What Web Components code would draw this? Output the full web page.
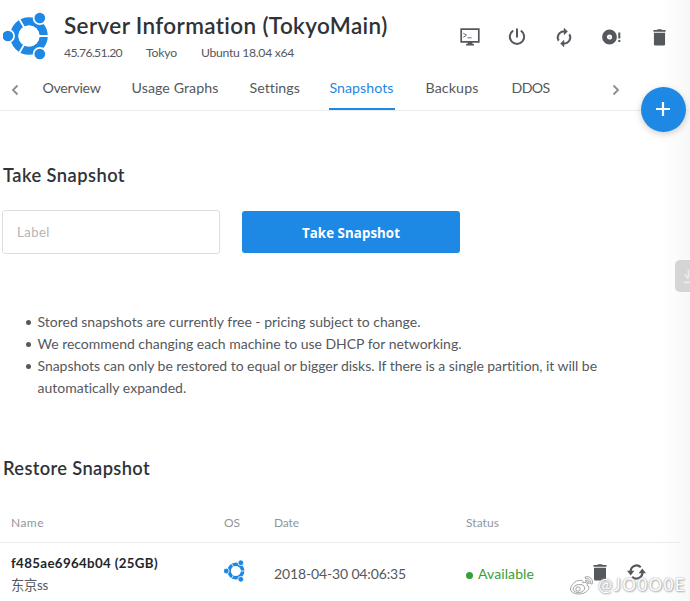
<!DOCTYPE html>
<html lang="en">
<head>
<meta charset="utf-8">
<title>Server Information</title>
<style>
html,body{margin:0;height:601px;overflow:hidden;background:#fff}
body{font-family:Lato,"Noto Sans CJK SC",sans-serif;color:#55585c}
</style>
</head>
<body>
<server-page></server-page>
<script>
const define = (name, html, setup) => customElements.define(name, class extends HTMLElement {
  connectedCallback() {
    if (this.shadowRoot) return;
    const root = this.attachShadow({ mode: 'open' });
    const t = document.createElement('template');
    t.innerHTML = html;
    root.append(t.content.cloneNode(true));
    if (setup) setup(this, root);
  }
});

/* A single line of text tracked to an exact width. */
define('fit-text', `<style>:host{display:inline-block;white-space:nowrap;vertical-align:top}span{display:inline-block}</style><span><slot></slot></span>`,
(el, root) => {
  const span = root.querySelector('span'), w = +el.getAttribute('w');
  const n = [...el.textContent].length;
  const natural = span.getBoundingClientRect().width;
  span.style.letterSpacing = ((w - natural) / n).toFixed(3) + 'px';
  el.style.width = w + 'px';
});

const ICONS = {
  ubuntu: ['0 0 46 48', '<circle cx="26" cy="24" r="14.700" fill="none" stroke="#1e88e5" stroke-width="8.200"/><path d="M26 24H47M26 24L15.500 5.800M26 24L15.500 42.200" stroke="#fff" stroke-width="1.800"/><circle cx="26" cy="24" r="10.500" fill="#fff"/><g fill="#1e88e5" stroke="#fff" stroke-width="1.700"><circle cx="4.900" cy="24" r="6.200"/><circle cx="36.800" cy="6" r="6.200"/><circle cx="36.800" cy="42" r="6.200"/></g>'],
  consol: ['0 0 20 18', '<path d="M1.2 1.2h17.6v12.6H1.2z" fill="none" stroke="currentColor" stroke-width="1.7"/><path d="M7.5 14h5v2H14v1.5H6V16h1.5z" fill="currentColor"/><path d="M3.3 5.2l3.2 2L3.3 9.300M7.500 9.800h4" fill="none" stroke="currentColor" stroke-width=".9"/>'],
  power: ['0 0 18 18', '<path d="M9 .6v9M5.200 2.600a7.200 7.200 0 1 0 7.600 0" fill="none" stroke="currentColor" stroke-width="2"/>'],
  restart: ['3 1 18 22', '<path fill="currentColor" stroke="currentColor" stroke-width=".4" d="M12 4V1l4 4-4 4V6a6 6 0 0 0-5.300 8.800l-1.460 1.460A8 8 0 0 1 12 4zM18.760 7.740A8 8 0 0 1 12 20v3l-4-4 4-4v3a6 6 0 0 0 5.300-8.800z"/>'],
  disc: ['0 0 19 16', '<circle cx="7.500" cy="8" r="5" fill="none" stroke="currentColor" stroke-width="4.800"/><circle cx="7.500" cy="8" r="1" fill="currentColor" opacity=".25"/><path d="M16.300 3.500h2v6h-2zM16.300 11h2v2h-2z" fill="currentColor"/>'],
  trash: ['0 0 14 18', '<path fill="currentColor" d="M1 4h12v12.200q0 1.300-1.300 1.300H2.300Q1 17.500 1 16.200zM.5 1.100h3.700L5.200.300h3.600l1 .8h3.700V3H.5z"/>'],
  cycle: ['0 0 20 16', '<path d="M14.500 3.200A6.300 6.300 0 0 0 3.800 8M5.500 12.800A6.300 6.300 0 0 0 16.200 8" fill="none" stroke="currentColor" stroke-width="2.300"/><path fill="currentColor" d="M0 6.800h7.800L3.900 11.400zM12.200 9.200L16.100 4.600l3.900 4.600z"/>'],
  left: ['0 0 8 12', '<path d="M6.500 1.500L2 6l4.500 4.500" fill="none" stroke="#8a8e92" stroke-width="1.800"/>'],
  right: ['0 0 8 12', '<path d="M1.500 1.500L6 6l-4.500 4.500" fill="none" stroke="#8a8e92" stroke-width="1.800"/>'],
  plus: ['0 0 14 14', '<path d="M7 0v14M0 7h14" stroke="#fff" stroke-width="2.200"/>'],
  download: ['0 0 14 20', '<path d="M12 3v9M7.500 8.500L12 13M6 17h8" fill="none" stroke="#ececec" stroke-width="2"/>'],
  weibo: ['0 0 24 20', '<g fill="#fff" stroke="#999" stroke-width=".9"><path d="M9.500 5.500c2-.8 4 0 3.300 2.300 3-1 5.200.1 4.200 2.500 5 2-.5 8.700-8 8.700C4 19 .5 16.800.5 14c0-3.500 5-9 9-8.500z"/><ellipse cx="9" cy="13.500" rx="5.800" ry="4" transform="rotate(-8 9 13.500)"/><circle cx="8" cy="14" r="2.200"/><path d="M15 2c4.500-1.500 8.500 2 7.200 7l-1.800-.4c.8-3.500-1.800-6-5-5zM15.600 5.200c2.300-.6 4 .9 3.500 3.200l-1.400-.2c.2-1.300-.7-2-1.900-1.700z"/></g>']
};
define('ui-icon', `<style>:host{display:block;flex:none;color:#55585c}svg{display:block;width:100%;height:100%}</style>`, (el, root) => {
  const [vb, body] = ICONS[el.getAttribute('name')];
  const [w, h] = el.getAttribute('size').split('x');
  el.style.width = w + 'px'; el.style.height = h + 'px';
  const t = document.createElement('template');
  t.innerHTML = `<svg viewBox="${vb}" preserveAspectRatio="none">${body}</svg>`;
  root.append(t.content);
});

define('server-header', `<style>
:host{display:flex;height:70px;box-sizing:border-box;padding:11px 21px 0 3px;align-items:flex-start}
ui-icon[name=ubuntu]{margin-top:1px}
.info{margin-left:15px;flex:1}
h1{margin:0;font-size:22.500px;line-height:30px;height:32px;font-weight:600;color:#2f3337}
.meta{display:flex;gap:24px;font-size:12.200px;line-height:20px}
.actions{display:grid;grid-template-columns:repeat(5,20px);gap:27.300px;justify-items:center;align-items:center;height:52px}
</style>
<ui-icon name="ubuntu" size="46x48"></ui-icon>
<div class="info"><h1><fit-text w="324">Server Information (TokyoMain)</fit-text></h1>
<div class="meta"><fit-text w="58">45.76.51.20</fit-text><fit-text w="31">Tokyo</fit-text><fit-text w="93">Ubuntu 18.04 x64</fit-text></div></div>
<div class="actions"><ui-icon name="consol" size="20x18"></ui-icon><ui-icon name="power" size="18x18"></ui-icon><ui-icon name="restart" size="16x19"></ui-icon><ui-icon name="disc" size="19x16"></ui-icon><ui-icon name="trash" size="13x17"></ui-icon></div>`);

define('tab-item', `<style>:host{display:block;box-sizing:border-box;height:41px;padding:8px 1px 0;font-size:14.200px;line-height:20px}
:host([active]){color:#1e88e5;border-bottom:2px solid #1e88e5;height:40px}</style><slot></slot>`);

define('tab-bar', `<style>:host{display:grid;grid-template-columns:41.500px 89px 118px 80px 96px 86px 98.500px 1fr;height:40px;border-bottom:1px solid #e9ebed;justify-items:start;align-items:start}
ui-icon{margin:14px 0 0 11px}ui-icon[name=right]{margin-left:3px}</style>
<ui-icon name="left" size="8x12"></ui-icon>
<tab-item><fit-text w="58">Overview</fit-text></tab-item><tab-item><fit-text w="87">Usage Graphs</fit-text></tab-item><tab-item><fit-text w="50">Settings</fit-text></tab-item><tab-item active><fit-text w="64">Snapshots</fit-text></tab-item><tab-item><fit-text w="53">Backups</fit-text></tab-item><tab-item><fit-text w="38">DDOS</fit-text></tab-item>
<ui-icon name="right" size="8x12"></ui-icon>`);

define('section-title', `<style>:host{display:block;font-size:18.300px;line-height:24px;font-weight:600;color:#2f3337}</style><slot></slot>`);

define('snapshot-form', `<style>:host{display:flex;gap:22px;padding-left:2px;height:44px;align-items:center}
input{box-sizing:border-box;width:218px;height:44px;border:1px solid #dcdfe0;border-radius:3px;padding:0 14px;background:#fff;font:13px Lato,sans-serif;letter-spacing:.5px}
input::placeholder{color:#b3b5b3}
button{width:218px;height:42px;border:0;border-radius:3px;background:#1e88e5;color:#fff;font:bold 13.300px "Open Sans",sans-serif;padding:1px 0 0}</style>
<input placeholder="Label"><button><fit-text w="98">Take Snapshot</fit-text></button>`);

define('note-list', `<style>ul{margin:0;padding:0;list-style:none;font-size:14px;line-height:22px}
li{display:flex}li::before{content:"";flex:none;width:5px;height:5px;border-radius:50%;background:#55585c;margin:9px 7px 0 25.500px}div{display:flex;flex-direction:column}</style>
<ul><li><fit-text w="383">Stored snapshots are currently free - pricing subject to change.</fit-text></li>
<li><fit-text w="424">We recommend changing each machine to use DHCP for networking.</fit-text></li>
<li><div><fit-text w="560">Snapshots can only be restored to equal or bigger disks. If there is a single partition, it will be</fit-text><fit-text w="149">automatically expanded.</fit-text></div></li></ul>`);

define('snapshot-table', `<style>
:host{display:block;width:680px}
.head,.row{display:grid;grid-template-columns:213px 50px 192px 127px 1fr;padding-left:11px}
.head{height:29px;font-size:12px;line-height:20px;color:#92969a;border-bottom:1px solid #e9ebed}
.row{height:58px}
.name{font-size:13.300px;line-height:20px;padding-top:10px;display:flex;flex-direction:column;gap:2px}
.name b{color:#222629;font-weight:700}
.os{padding-top:17px}
.mid{font-size:14px;line-height:20px;padding-top:20.500px}
.ok{color:#35a03b;display:flex}
.ok::before{content:"";width:7px;height:7px;border-radius:50%;background:#35a03b;margin:8px 5px 0 0}
.act{display:flex;gap:20px;padding-top:21px}
</style>
<div class="head"><fit-text w="33">Name</fit-text><fit-text w="16">OS</fit-text><fit-text w="25">Date</fit-text><fit-text w="33">Status</fit-text></div>
<div class="row"><div class="name"><b><fit-text w="147">f485ae6964b04 (25GB)</fit-text></b><fit-text w="37">东京ss</fit-text></div>
<div class="os"><ui-icon name="ubuntu" size="21x22"></ui-icon></div>
<div class="mid"><fit-text w="132">2018-04-30 04:06:35</fit-text></div>
<div class="mid ok"><fit-text w="56">Available</fit-text></div>
<div class="act"><ui-icon name="trash" size="14x17"></ui-icon><ui-icon name="cycle" size="19x16"></ui-icon></div></div>`);

define('add-button', `<style>:host{position:absolute;left:640.500px;top:87px;width:45px;height:45px;border-radius:50%;background:#1e88e5;box-shadow:0 2px 7px rgba(0,0,0,.2);display:grid;place-items:center}ui-icon{margin:-2px 0 0 -1px}</style><ui-icon name="plus" size="14x14"></ui-icon>`);
define('side-handle', `<style>:host{position:absolute;left:675px;top:260px;width:15px;height:32px;border-radius:5px 0 0 5px;background:#d5d5d5;display:grid;place-items:center end}</style><ui-icon name="download" size="11x18"></ui-icon>`);
define('photo-credit', `<style>:host{position:absolute;left:570px;top:575px;display:flex;gap:4px;align-items:flex-start;font-size:17px;line-height:20px;color:#fff;text-shadow:0 0 1px #aaa,1px 1px 2px #aaa,0 0 2px #bbb}</style><ui-icon name="weibo" size="24x20"></ui-icon><fit-text w="88">@JO0O0E</fit-text>`);

define('server-page', `<style>
:host{display:block;position:relative;width:690px;height:601px;overflow:hidden;background:linear-gradient(90deg,#fff 660px,#f8f8f8 690px)}
section{padding-left:3px}
.take{margin-top:52px}.restore{margin-top:57px}
snapshot-form{margin:23px 0 57px -3px}note-list{margin-left:-3px;display:block}
snapshot-table{margin-top:33px}
</style>
<server-header></server-header><tab-bar></tab-bar>
<section class="take"><section-title><fit-text w="122">Take Snapshot</fit-text></section-title><snapshot-form></snapshot-form><note-list></note-list></section>
<section class="restore"><section-title><fit-text w="147">Restore Snapshot</fit-text></section-title></section>
<snapshot-table></snapshot-table>
<add-button></add-button><side-handle></side-handle><photo-credit></photo-credit>`);
</script>
</body>
</html>
